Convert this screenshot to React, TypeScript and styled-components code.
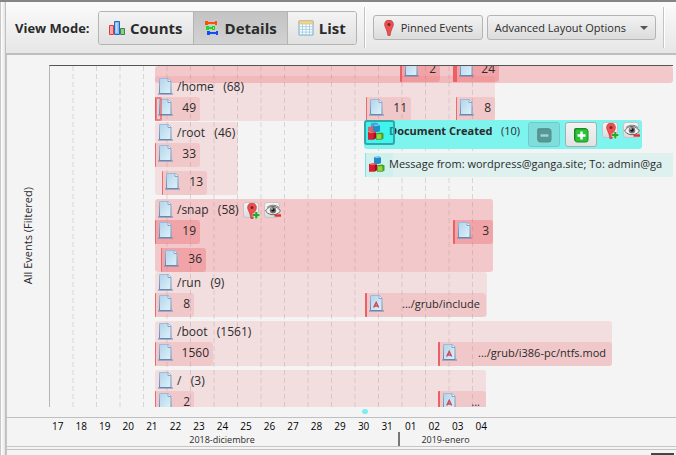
import React, { useState } from "react";
import styled, { createGlobalStyle } from "styled-components";

const GlobalStyle = createGlobalStyle`
  *, *::before, *::after { box-sizing: border-box; }
  body { margin: 0; background: #f4f4f4; overflow: hidden; }
  button { font: inherit; color: inherit; margin: 0; padding: 0; }
  svg { display: block; flex: none; }
`;

const Page = styled.div`
  display: flex;
  flex-direction: column;
  min-height: 100vh;
  background: #f4f4f4;
  border-top: 2px solid #858585;
  color: #2b2b2b;
  font: 12px/16px "Open Sans", "Noto Sans", sans-serif;
`;

const Body = styled.div`
  display: flex;
  flex: 1;
`;

const Divider = styled.div`
  flex: none;
  width: 6px;
  border-left: 1px solid #c8c8c8;
  border-right: 1px solid #c0c0c0;
  background: linear-gradient(to right, #fff, #e4e4e4);
`;

const Main = styled.main`
  display: flex;
  flex-direction: column;
  flex: 1;
  min-width: 0;
`;

const Toolbar = styled.div`
  display: flex;
  align-items: center;
  height: 53px;
  padding: 0 9px;
  border-bottom: 2px solid #bdbdbd;
  background: linear-gradient(#fbfbfb, #e6e6e6);
  white-space: nowrap;
`;

const ModeLabel = styled.span`
  width: 83px;
  flex: none;
  font-size: 13px;
  font-weight: 700;
`;

const Segments = styled.div`
  display: flex;
  flex: none;
  height: 34px;
  border: 1px solid #b4b4b4;
  border-radius: 3px;
  overflow: hidden;
`;

const Segment = styled.button<{ $active?: boolean }>`
  display: flex;
  align-items: center;
  gap: 5px;
  padding: 0 10px;
  border: 0;
  border-left: 1px solid #b4b4b4;
  background: ${(p) =>
    p.$active ? "linear-gradient(#c3c3c3, #d2d2d2)" : "linear-gradient(#f3f3f3, #e0e0e0)"};
  font-size: 15px;
  font-weight: 700;
  &:first-child { border-left: 0; }
`;

const Rule = styled.div`
  flex: none;
  width: 2px;
  height: 41px;
  margin: 0 7px;
  border-left: 1px solid #c4c4c4;
  border-right: 1px solid #fff;
`;

const ToolButton = styled.button<{ $width: number }>`
  display: flex;
  align-items: center;
  flex: none;
  gap: 4px;
  height: 25px;
  min-width: ${(p) => p.$width}px;
  padding: 0 7px;
  border: 1px solid #b4b4b4;
  border-radius: 3px;
  background: linear-gradient(#f2f2f2, #dcdcdc);
  font-size: 11px;
  & + & { margin-left: 4px; }
`;

const Caret = styled.span`
  margin-left: auto;
  border: 4px solid transparent;
  border-top-color: #555;
  border-bottom: 0;
`;

const Timeline = styled.section`
  display: flex;
  flex-direction: column;
  flex: 1;
  border-left: 1px solid #c4c4c4;
`;

const ChartRow = styled.div`
  display: flex;
  flex: 1;
  padding: 10px 3px 0 0;
`;

const YAxis = styled.div`
  display: flex;
  align-items: center;
  justify-content: center;
  flex: none;
  width: 42px;
`;

const YLabel = styled.span`
  writing-mode: vertical-rl;
  transform: rotate(180deg);
  font-size: 11px;
`;

const Plot = styled.div`
  position: relative;
  flex: 1;
  min-height: 342px;
  overflow: hidden;
  border-left: 1px solid #b5b5b5;
  border-top: 1px solid #555;
`;

const GridLines = styled.svg`
  width: 100%;
  height: 100%;
`;

const Marks = styled.div`
  height: 10px;
  flex: none;
  padding: 2px 0 0 355px;
`;

const Dot = styled.div`
  width: 6px;
  height: 5px;
  border-radius: 3px;
  background: #7eeeee;
`;

const XAxis = styled.div`
  flex: none;
  height: 30px;
  padding-left: 39px;
  border-top: 1px solid #c0c0c0;
  border-bottom: 1px solid #c4c4c4;
  color: #000;
  font-size: 10px;
`;

const Days = styled.div`
  display: grid;
  grid-template-columns: repeat(19, 1fr);
  width: 447px;
  height: 14px;
  line-height: 16px;
  text-align: center;
`;

const Months = styled.div`
  display: flex;
  height: 14px;
  color: #2b2b2b;
  font-size: 9px;
  line-height: 16px;
  text-align: center;
`;

const Month = styled.span<{ $width: number }>`
  width: ${(p) => p.$width}px;
  & + & { border-left: 2px solid #777; }
`;

const Footer = styled.div`
  display: flex;
  justify-content: flex-end;
  align-items: flex-end;
  flex: none;
  height: 7px;
  margin-top: 2px;
  padding-right: 2px;
  border-top: 1px solid #c4c4c4;
`;

const Handle = styled.div`
  width: 23px;
  height: 3px;
  background: #444;
`;

type Tone = "light" | "medium";

interface Box {
  $x: number;
  $y: number;
  $w: number;
  $h: number;
}

const Placed = styled.div<Box>`
  position: absolute;
  left: ${(p) => p.$x}px;
  top: ${(p) => p.$y}px;
  width: ${(p) => p.$w}px;
  height: ${(p) => p.$h}px;
`;

const Cluster = styled(Placed)<{ $tone: Tone }>`
  border-radius: 3px;
  background: ${(p) =>
    p.$tone === "medium" ? "rgba(238, 100, 105, 0.3)" : "rgba(238, 100, 105, 0.15)"};
`;

const ClusterTitle = styled.div`
  display: flex;
  align-items: center;
  gap: 4px;
  height: 21px;
  padding: 0 3px;
  white-space: pre;
`;

const Event = styled(Placed)<{ $tone: Tone; $bar: number }>`
  display: flex;
  align-items: center;
  justify-content: space-between;
  padding: 0 4px 3px 2px;
  border-left: ${(p) => p.$bar}px solid ${(p) => (p.$bar > 1 ? "#ec5f63" : "#ea6a6e")};
  border-radius: 1px 3px 3px 1px;
  background: ${(p) =>
    p.$tone === "medium" ? "rgba(238, 90, 95, 0.32)" : "rgba(238, 100, 105, 0.18)"};
  white-space: nowrap;
`;

const PathLabel = styled.span`
  margin-right: 2px;
  font-size: 11px;
`;

const Span = styled(Placed)`
  border: 2px solid rgba(230, 80, 85, 0.6);
  border-radius: 2px;
`;

const SelectedCluster = styled(Placed)`
  display: flex;
  align-items: flex-start;
  padding: 2px 3px 0 25px;
  border-radius: 3px;
  background: #7ef4ef;
  white-space: pre;
`;

const SelectedTitle = styled.span`
  flex: 1;
  line-height: 18px;
  font-size: 11px;
`;

const StepButtons = styled.span`
  display: flex;
  flex: none;
  gap: 5px;
  margin-right: 5px;
`;

const StepButton = styled.button`
  display: grid;
  place-items: center;
  width: 32px;
  height: 25px;
  border: 1px solid #a9adad;
  border-radius: 3px;
  background: linear-gradient(#f3f3f3, #e2e2e2);
  &:disabled { border-color: #6cccc9; background: #7fdedb; }
`;

const MiniButtons = styled.span`
  display: flex;
  flex: none;
  gap: 5px;
`;

const MiniButton = styled.button`
  display: grid;
  place-items: center;
  flex: none;
  width: 16px;
  height: 16px;
  border: 1px solid #c9c4c4;
  border-radius: 3px;
  background: linear-gradient(#f6f6f6, #dcdcdc);
`;

const FocusBox = styled(Placed)`
  padding: 0 0 0 1px;
  border: 2px solid #36a5a6;
  border-radius: 3px;
  background: rgba(0, 244, 236, 0.5);
`;

const MessageEvent = styled(Placed)`
  display: flex;
  align-items: center;
  gap: 4px;
  padding: 0 0 2px 2px;
  border-left: 1px solid #7ee6e2;
  background: linear-gradient(to right, #cff1ee 27px, #def1ef 27px);
  font-size: 11px;
  white-space: nowrap;
  overflow: hidden;
`;

const FileIcon = ({ letter }: { letter?: boolean }) => (
  <svg width="15" height="17" viewBox="0 0 15 17">
    <defs>
      <linearGradient id="paper" x1="0" y1="0" x2="1" y2="1">
        <stop offset="0" stopColor="#b4d3ea" />
        <stop offset="1" stopColor="#dcf3fa" />
      </linearGradient>
      <linearGradient id="edge" x1="0" y1="0" x2="0" y2="1">
        <stop offset="0" stopColor="#9fb9d8" />
        <stop offset="1" stopColor="#6688b4" />
      </linearGradient>
    </defs>
    <path d="M0 16h15" stroke="#6f86ad" strokeOpacity=".75" strokeWidth="1.4" />
    <path d="M1.5 .5h9l2.5 2.5v12.5h-11.5z" fill="url(#paper)" stroke="url(#edge)" />
    <path d="M10 .5v3h3" fill="#f3fbff" stroke="#88a5c8" />
    {letter && <path d="M4.7 12.5 7.2 7.5 9.7 12.5M5.7 11h3" fill="none" stroke="#cc4a5c" strokeWidth="1.5" />}
  </svg>
);

const BarsIcon = () => (
  <svg width="16" height="16" viewBox="0 0 16 16">
    <path d="M.5 5.5h4v9h-4z" fill="#f7a7a9" stroke="#da3c45" />
    <path d="M5.5 1.5h5v13h-5z" fill="#82b8f1" stroke="#2965bd" />
    <path d="M7.5 3v10" stroke="#b9dafa" strokeWidth="2" />
    <path d="M11.5 8.5h4v6h-4z" fill="#91c995" stroke="#3e8548" />
  </svg>
);

const DetailsIcon = () => (
  <svg width="16" height="16" viewBox="0 0 16 16">
    <path d="M2 2h11v2H2zM1 1h3v4H1zM11 1h2v4h-2z" fill="#f8500d" />
    <path d="M3 7h6v2H3zM2 6h3v4H2z" fill="#19df1d" />
    <path d="M8.5 6.5h2v3h-2z" fill="#a9ecaa" stroke="#19c81d" />
    <path d="M3 12h11v2H3zM3 11h3v4H3zM12 11h2v4h-2z" fill="#124ff2" />
  </svg>
);

const TableIcon = () => (
  <svg width="16" height="16" viewBox="0 0 16 16">
    <path d="M1 1h14v14H1z" fill="#fbfdfe" stroke="#79aaca" />
    <path d="M1 1h14v3H1z" fill="#f4d68a" stroke="#d3b566" strokeWidth=".6" />
    <path d="M4.5 4v11M8 4v11M11.5 4v11M1 6.7h14M1 9.4h14M1 12.1h14" stroke="#9bcbe0" strokeWidth=".8" />
  </svg>
);

const PinShape = () => (
  <>
    <path d="M8 0C5.2 0 3.6 2 3.6 4.4c0 2.8 2.4 4.5 3.3 11.1h2.2c.9-6.6 3.3-8.3 3.3-11.1C12.4 2 10.8 0 8 0z" fill="#ec5051" stroke="#b72e33" strokeWidth=".6" />
    <circle cx="8" cy="4.5" r="1.5" fill="#782326" />
  </>
);

const PinIcon = () => (
  <svg width="16" height="16" viewBox="0 0 16 16"><PinShape /></svg>
);

const AddPinIcon = () => (
  <svg width="16" height="16" viewBox="0 0 16 16">
    <PinShape />
    <path d="M12.3 8.7v7M8.8 12.2h7" stroke="#e9f5e9" strokeWidth="3.4" />
    <path d="M12.3 9v6.5M9 12.2h6.5" stroke="#1fae2c" strokeWidth="2.2" />
  </svg>
);

const HideIcon = () => (
  <svg width="16" height="16" viewBox="0 0 16 16">
    <path d="M.5 8C3 4.3 5.2 3.5 8 3.5s5.3 1.3 7.5 4.5C13 10.8 10.8 11.7 8 11.7S3 10.8.5 8z" fill="#f2f2f2" stroke="#666" />
    <path d="M2 4.5C6 1.2 11 1.7 14 4.6" fill="none" stroke="#777" />
    <circle cx="8" cy="7.2" r="3.2" fill="#777" />
    <circle cx="8" cy="7" r="1.8" fill="#151515" />
    <circle cx="7" cy="6" r=".8" fill="#fff" />
    <path d="M9.5 12.5h6.5" stroke="#e22d2f" strokeWidth="2.4" />
  </svg>
);

const CubesShape = () => (
  <>
    <path d="m6 1 5-.5 2 1v5.5l-2 1H6z" fill="#218bc9" />
    <path d="m6 1 5-.5 2 1-5 .8z" fill="#79c8ef" />
    <path d="m1 8 6-.8 2 1.3v5.7l-2 1.3H1z" fill="#a90a1e" />
    <path d="M1 9h5.8v6.3H1z" fill="#dc1c30" />
    <path d="m1 8 6-.8 2 1.3-6 .8z" fill="#f36a6c" />
    <path d="m9 9.2 5.5-.7 2 1v5l-2 1.3H9z" fill="#4c9b26" />
    <path d="M9.7 10.2h4.7v4.7H9.7z" fill="#94d541" />
  </>
);

const CubesIcon = () => (
  <svg width="17" height="17" viewBox="0 0 17 17"><CubesShape /></svg>
);

const StackedCubesIcon = () => (
  <svg width="20" height="20" viewBox="0 0 20 20">
    <path d="m4 1 5-.5 2 1v4H4z" fill="#43a5da" />
    <path d="m1 5 5-.7v5H1z" fill="#e75b62" />
    <g transform="translate(0 2)"><CubesShape /></g>
  </svg>
);

const StepIcon = ({ plus }: { plus?: boolean }) => (
  <svg width="16" height="16" viewBox="0 0 16 16">
    <rect x="1" y="1" width="13" height="13" rx="2" fill={plus ? "#167f20" : "#66a1a0"} />
    <rect x="2" y="2" width="13" height="13" rx="2" fill={plus ? "#2cc236" : "#579896"} stroke={plus ? "#15962b" : "#528f8d"} />
    <path d={plus ? "M8.5 4.5v8M4.5 8.5h8" : "M4.5 8.5h8"} stroke={plus ? "#fff" : "#94dbd8"} strokeWidth="2.4" />
  </svg>
);

interface ClusterData {
  x: number;
  y: number;
  w: number;
  h: number;
  title?: string;
  active?: boolean;
}

const clusters: ClusterData[] = [
  { x: 105, y: 0, w: 518, h: 17, active: true },
  { x: 105, y: 10, w: 340, h: 45, title: "/home   (68)" },
  { x: 105, y: 56, w: 83, h: 73, title: "/root   (46)" },
  { x: 105, y: 133, w: 338, h: 73, title: "/snap   (58)", active: true },
  { x: 105, y: 206, w: 332, h: 45, title: "/run   (9)" },
  { x: 105, y: 255, w: 457, h: 45, title: "/boot   (1561)" },
  { x: 105, y: 304, w: 331, h: 45, title: "/   (3)" },
];

interface EventData {
  x: number;
  y: number;
  w: number;
  label: string;
  active?: boolean;
  bar?: number;
  path?: boolean;
}

const events: EventData[] = [
  { x: 350, y: -8, w: 40, label: "2", active: true, bar: 2 },
  { x: 403, y: -8, w: 46, label: "24", active: true, bar: 4 },
  { x: 105, y: 31, w: 45, label: "49" },
  { x: 316, y: 31, w: 45, label: "11" },
  { x: 406, y: 31, w: 39, label: "8" },
  { x: 105, y: 77, w: 45, label: "33" },
  { x: 112, y: 105, w: 45, label: "13" },
  { x: 105, y: 154, w: 45, label: "19", active: true },
  { x: 111, y: 182, w: 45, label: "36", active: true },
  { x: 403, y: 154, w: 40, label: "3", active: true, bar: 2 },
  { x: 105, y: 227, w: 39, label: "8" },
  { x: 315, y: 227, w: 121, label: ".../grub/include", path: true, bar: 2 },
  { x: 105, y: 276, w: 58, label: "1560" },
  { x: 388, y: 276, w: 174, label: ".../grub/i386-pc/ntfs.mod", path: true, bar: 2 },
  { x: 105, y: 325, w: 39, label: "2" },
  { x: 388, y: 325, w: 48, label: "...", path: true, bar: 2 },
];

const days = "17 18 19 20 21 22 23 24 25 26 27 28 29 30 31 01 02 03 04".split(" ");

const modes = [
  { name: "Counts", Icon: BarsIcon },
  { name: "Details", Icon: DetailsIcon },
  { name: "List", Icon: TableIcon },
];

const PinAndHide = () => (
  <MiniButtons>
    <MiniButton aria-label="Pin"><AddPinIcon /></MiniButton>
    <MiniButton aria-label="Hide"><HideIcon /></MiniButton>
  </MiniButtons>
);

export default function App() {
  const [mode, setMode] = useState("Details");
  return (
    <Page>
      <GlobalStyle />
      <Body>
        <Divider />
        <Main>
          <Toolbar>
            <ModeLabel>View Mode:</ModeLabel>
            <Segments role="group" aria-label="View Mode">
              {modes.map(({ name, Icon }) => (
                <Segment key={name} $active={mode === name} aria-pressed={mode === name} onClick={() => setMode(name)}>
                  <Icon />
                  {name}
                </Segment>
              ))}
            </Segments>
            <Rule />
            <ToolButton $width={110}><PinIcon />Pinned Events</ToolButton>
            <ToolButton $width={169} aria-haspopup="menu">Advanced Layout Options<Caret /></ToolButton>
            <Rule />
          </Toolbar>
          <Timeline>
            <ChartRow>
              <YAxis><YLabel>All Events (Filtered)</YLabel></YAxis>
              <Plot>
                <GridLines>
                  {days.slice(1).map((day, i) => (
                    <line key={day} x1={23 + (i * 47) / 2} x2={23 + (i * 47) / 2} y1="0" y2="100%" stroke="#d6d6d6" strokeDasharray="5 3" />
                  ))}
                </GridLines>
                {clusters.map((c) => (
                  <Cluster key={c.y} $x={c.x} $y={c.y} $w={c.w} $h={c.h} $tone={c.active ? "medium" : "light"}>
                    {c.title && (
                      <ClusterTitle>
                        <FileIcon />
                        {c.title}
                        {c.active && <PinAndHide />}
                      </ClusterTitle>
                    )}
                  </Cluster>
                ))}
                {events.map((e) => (
                  <Event key={`${e.x}-${e.y}`} $x={e.x} $y={e.y} $w={e.w} $h={24} $tone={e.active ? "medium" : "light"} $bar={e.bar ?? 1}>
                    <FileIcon letter={e.path} />
                    {e.path ? <PathLabel>{e.label}</PathLabel> : e.label}
                  </Event>
                ))}
                <Span $x={105} $y={31} $w={7} $h={24} />
                <SelectedCluster $x={314} $y={54} $w={278} $h={29}>
                  <SelectedTitle><b>Document Created</b>   (10)</SelectedTitle>
                  <StepButtons>
                    <StepButton disabled aria-label="Collapse"><StepIcon /></StepButton>
                    <StepButton aria-label="Expand"><StepIcon plus /></StepButton>
                  </StepButtons>
                  <PinAndHide />
                </SelectedCluster>
                <FocusBox $x={314} $y={54} $w={31} $h={25}><StackedCubesIcon /></FocusBox>
                <MessageEvent $x={315} $y={87} $w={308} $h={24}>
                  <CubesIcon />
                  Message from: wordpress@ganga.site; To: admin@ga
                </MessageEvent>
              </Plot>
            </ChartRow>
            <Marks><Dot /></Marks>
            <XAxis>
              <Days>{days.map((d) => <span key={d}>{d}</span>)}</Days>
              <Months>
                <Month $width={352}>2018-diciembre</Month>
                <Month $width={93}>2019-enero</Month>
              </Months>
            </XAxis>
            <Footer><Handle /></Footer>
          </Timeline>
        </Main>
      </Body>
    </Page>
  );
}
